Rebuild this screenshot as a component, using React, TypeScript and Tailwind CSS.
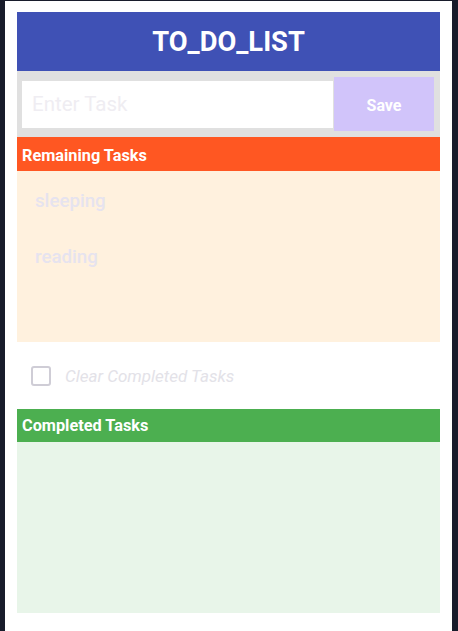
import React from 'react';

const remaining = ['sleeping', 'reading'];

export default function App() {
  return (
    <div className="min-h-[631px] bg-[#181c2b] pl-[5px] pr-[6px] pt-px font-['Roboto',sans-serif]">
      <div className="min-h-[630px] bg-white px-3 pt-[11px] pb-[18px]">
        <header className="flex h-[59px] items-center justify-center bg-[#3f51b5] pt-0.5">
          <h1 className="text-[27.3px] font-bold text-white">TO_DO_LIST</h1>
        </header>

        <div className="flex h-[66px] items-center bg-[#e0e0e0] pl-[5px] pr-[6px]">
          <input
            type="text"
            placeholder="Enter Task"
            className="h-[47px] flex-1 bg-white px-[10px] text-[20.5px] text-gray-600 outline-none placeholder:text-[#efedf2]"
          />
          <button className="ml-px h-[54px] w-[100px] pt-1 bg-[#d1c4fa] text-base font-bold text-white">
            Save
          </button>
        </div>

        <div className="flex h-[34px] items-center bg-[#ff5722] px-[5px] pt-1">
          <h2 className="text-[16.3px] font-bold text-white">Remaining Tasks</h2>
        </div>
        <ul className="h-[171px] bg-[#fff1de] pt-[16px]">
          {remaining.map((task) => (
            <li key={task} className="flex h-14 items-start px-[18px] text-[18.7px] font-medium text-[#e6e3ef]">
              {task}
            </li>
          ))}
        </ul>

        <label className="flex h-[67px] items-center gap-[14px] px-[14px]">
          <span className="h-5 w-5 rounded-[3px] border-2 border-[#cfcdd6] bg-white" />
          <span className="pt-0.5 text-[17px] italic text-[#e3e2e8]">Clear Completed Tasks</span>
        </label>

        <div className="flex h-[33px] items-center bg-[#4caf50] px-[5px] pt-0.5">
          <h2 className="text-[16.3px] font-bold text-white">Completed Tasks</h2>
        </div>
        <div className="h-[171px] bg-[#e8f5e9]" />
      </div>
    </div>
  );
}
